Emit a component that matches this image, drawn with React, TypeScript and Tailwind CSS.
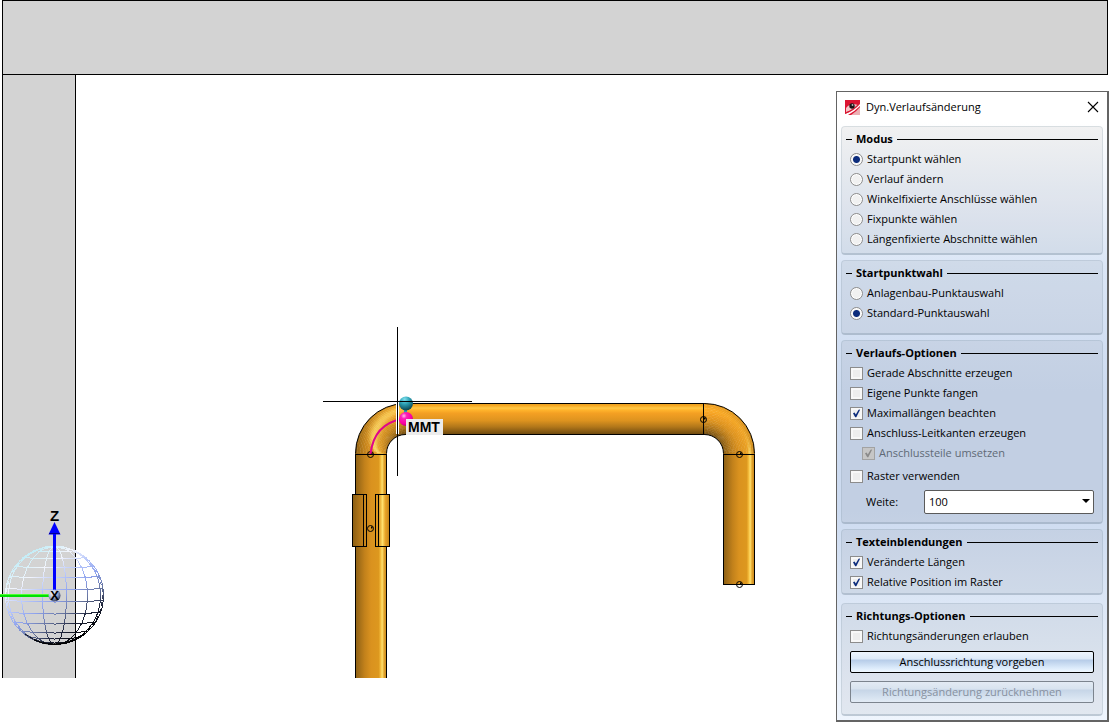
import { useState } from 'react'
import type { ReactNode } from 'react'

type Rgb = [number, number, number]
type Stop = [number, string]

// Shading across the tube, left to right for risers and top to bottom for runs
const RISER: Stop[] = [
  [0, '#8a5e14'],
  [0.12, '#a06c17'],
  [0.3, '#c2811b'],
  [0.5, '#da921f'],
  [0.74, '#dd981f'],
  [0.8, '#f3bb3c'],
  [0.85, '#ffe06c'],
  [0.91, '#e0a02a'],
  [1, '#c4841b'],
]
const RUN: Stop[] = [
  [0, '#e39a1f'],
  [0.08, '#f6a822'],
  [0.16, '#ffc844'],
  [0.22, '#ffb42c'],
  [0.32, '#f4a023'],
  [0.55, '#dd931f'],
  [0.75, '#b0761a'],
  [1, '#67450e'],
]
const RISER_MATT: Stop[] = [
  [0, '#8a5e14'],
  [0.12, '#a06c17'],
  [0.3, '#c2811b'],
  [0.5, '#da921f'],
  [0.8, '#e8a024'],
  [1, '#c4841b'],
]
const RUN_MATT: Stop[] = [
  [0, '#f0a122'],
  [0.2, '#ffae28'],
  [0.35, '#f4a023'],
  [0.55, '#dd931f'],
  [0.75, '#b0761a'],
  [1, '#67450e'],
]

const toRgb = (hex: string): Rgb => [
  parseInt(hex.slice(1, 3), 16),
  parseInt(hex.slice(3, 5), 16),
  parseInt(hex.slice(5, 7), 16),
]

const mix = (a: Rgb, b: Rgb, t: number): Rgb => [
  a[0] + (b[0] - a[0]) * t,
  a[1] + (b[1] - a[1]) * t,
  a[2] + (b[2] - a[2]) * t,
]

function sample(stops: Stop[], pos: number): Rgb {
  for (let i = 1; i < stops.length; i++) {
    if (pos <= stops[i][0]) {
      const [p0, c0] = stops[i - 1]
      const [p1, c1] = stops[i]
      return mix(toRgb(c0), toRgb(c1), (pos - p0) / (p1 - p0))
    }
  }
  return toRgb(stops[stops.length - 1][1])
}

const OUTER = 50
const INNER = 19

// 90 degree elbow, built from small shaded patches around (cx, cy)
function Elbow({ cx, cy, side }: { cx: number; cy: number; side: 'left' | 'right' }) {
  const patches: ReactNode[] = []
  const dir = side === 'left' ? -1 : 1
  const steps = 24
  const bands = 20
  for (let i = 0; i < steps; i++) {
    const t = (i + 0.5) / steps
    const a0 = (i / steps) * (Math.PI / 2)
    const a1 = Math.min(((i + 1.2) / steps) * (Math.PI / 2), Math.PI / 2)
    for (let j = 0; j < bands; j++) {
      const q = (j + 0.5) / bands
      const riser = sample(RISER_MATT, side === 'left' ? q : 1 - q)
      const run = sample(RUN_MATT, q)
      const center = side === 'left' ? 0.84 - 0.68 * Math.sqrt(t) : 0.15
      const width = side === 'left' ? 0.06 + 0.12 * Math.sin(Math.PI * t) : 0.05
      const power = side === 'left' ? 0.9 - 0.45 * t : Math.pow(1 - t, 6) * 0.9
      const glow = power * Math.exp(-Math.pow((q - center) / width, 2))
      const c = mix(mix(riser, run, t), [255, 226, 112], glow).map(Math.round)
      const r0 = OUTER - (OUTER - INNER) * (j / bands)
      const r1 = Math.max(OUTER - (OUTER - INNER) * ((j + 1.2) / bands), INNER)
      const pt = (r: number, a: number) =>
        `${(cx + dir * r * Math.cos(a)).toFixed(2)} ${(cy - r * Math.sin(a)).toFixed(2)}`
      patches.push(
        <path
          key={`${i}-${j}`}
          d={`M${pt(r0, a0)}L${pt(r0, a1)}L${pt(r1, a1)}L${pt(r1, a0)}Z`}
          fill={`rgb(${c.join(',')})`}
        />
      )
    }
  }
  const sweep = side === 'left' ? 1 : 0
  const arc = (r: number) => `M${cx + dir * r} ${cy}A${r} ${r} 0 0 ${sweep} ${cx} ${cy - r}`
  return (
    <g>
      {patches}
      <path d={arc(OUTER)} fill="none" stroke="#000" />
      <path d={arc(INNER)} fill="none" stroke="#000" />
    </g>
  )
}

function Gradient({ id, stops, vertical }: { id: string; stops: Stop[]; vertical?: boolean }) {
  return (
    <linearGradient id={id} x1="0" y1="0" x2={vertical ? '0' : '1'} y2={vertical ? '1' : '0'}>
      {stops.map(([pos, color]) => (
        <stop key={pos} offset={pos} stopColor={color} />
      ))}
    </linearGradient>
  )
}

function Node({ x, y }: { x: number; y: number }) {
  return (
    <g>
      <circle cx={x} cy={y} r="3" fill="none" stroke="#000" />
      <path d={`M${x + 0.5} ${y - 2}h1.5v2h-1.5z`} fill="#000" />
    </g>
  )
}

function Globe() {
  const radius = 49
  const parallels = [-48, -44, -37, -28, -18, -6, 6, 18, 28, 37, 43, 47]
  return (
    <g>
      <g fill="none" stroke="url(#globe)" shapeRendering="crispEdges">
        <circle cx="54.5" cy="595.5" r={radius} />
        <circle cx="54.5" cy="595.5" r={radius - 1} strokeDasharray="4 3" />
        {[12, 33, 46].map((rx) => (
          <ellipse key={rx} cx="54.5" cy="595.5" rx={rx} ry={radius} />
        ))}
        {parallels.map((dy) => {
          const half = Math.sqrt(radius * radius - dy * dy)
          const y = 595.5 + dy
          return (
            <path
              key={dy}
              d={`M${54.5 - half} ${y - 1}Q54.5 ${y + 2} ${54.5 + half} ${y - 0.9}`}
            />
          )
        })}
      </g>
      <path d="M25 634Q54 654 84 634" fill="none" stroke="#000" strokeDasharray="4 1" />
      <path d="M34 640Q54 649 74 640" fill="none" stroke="#000" />
      <rect x="0" y="594" width="50" height="3" fill="#00e000" />
      <rect x="0" y="594" width="50" height="1" fill="#4cff30" />
      <rect x="53" y="532" width="3" height="60" fill="#0000ff" />
      <path d="M54.5 522L60.5 534.5H48.5Z" fill="#0000ff" />
      <path d="M49 533.5h11" stroke="#000090" />
      <circle cx="54.5" cy="595.5" r="6" fill="url(#hub)" />
      <text x="54.5" y="521" textAnchor="middle" fontFamily="Liberation Sans, sans-serif" fontWeight="700" fontSize="15">
        Z
      </text>
      <text x="54.5" y="600" textAnchor="middle" fontFamily="Liberation Sans, sans-serif" fontWeight="700" fontSize="13">
        X
      </text>
    </g>
  )
}

function Drawing() {
  return (
    <svg className="absolute inset-0 h-full w-full" role="img" aria-label="Rohrverlauf">
      <defs>
        <Gradient id="riser" stops={RISER} />
        <Gradient id="run" stops={RUN} vertical />
        <Gradient id="clampLeft" stops={[[0, '#8a5e14'], [0.6, '#b87a1a'], [1, '#cf8b1d']]} />
        <Gradient id="clampRight" stops={[[0, '#dd951f'], [0.25, '#e09a20'], [0.5, '#ffe06c'], [0.7, '#e8a427'], [1, '#c4841b']]} />
        <linearGradient id="globe" gradientUnits="userSpaceOnUse" x1="28" y1="552" x2="84" y2="636">
          <stop offset="0" stopColor="#c0ecf6" />
          <stop offset="0.22" stopColor="#f2f5fd" />
          <stop offset="0.4" stopColor="#b4c4fa" />
          <stop offset="0.55" stopColor="#8ea2ec" />
          <stop offset="0.7" stopColor="#66749f" />
          <stop offset="0.85" stopColor="#1c2238" />
          <stop offset="1" stopColor="#000" />
        </linearGradient>
        <radialGradient id="hub" cx="0.35" cy="0.3" r="0.75">
          <stop offset="0" stopColor="#fff" />
          <stop offset="0.5" stopColor="#a9b6dc" />
          <stop offset="1" stopColor="#2c3658" />
        </radialGradient>
        <radialGradient id="cyan" cx="0.4" cy="0.2" r="0.8">
          <stop offset="0" stopColor="#7fe0ee" />
          <stop offset="0.45" stopColor="#2b9fb2" />
          <stop offset="1" stopColor="#0c4450" />
        </radialGradient>
        <radialGradient id="magenta" cx="0.35" cy="0.28" r="0.8">
          <stop offset="0" stopColor="#ffc0ec" />
          <stop offset="0.25" stopColor="#ff20b8" />
          <stop offset="0.7" stopColor="#f800a0" />
          <stop offset="1" stopColor="#900060" />
        </radialGradient>
      </defs>

      {/* walls */}
      <rect x="2.5" y="0.5" width="1105" height="74" fill="#d3d3d3" stroke="#000" />
      <rect x="3" y="75" width="72" height="603" fill="#d3d3d3" />
      <path d="M2.5 75V678M75.5 75V678" stroke="#000" />

      <Globe />

      {/* pipe */}
      <rect x="355" y="453" width="32" height="225" fill="url(#riser)" />
      <path d="M355.5 454V678M386.5 454V678" stroke="#000" />
      <rect x="405" y="403" width="300" height="32" fill="url(#run)" />
      <path d="M405 403.5H705M405 434.5H705" stroke="#000" />
      <rect x="723" y="453" width="32" height="131" fill="url(#riser)" />
      <path d="M723.5 454V584M754.5 454V584M723 584.5H755" stroke="#000" />
      <Elbow cx={405.5} cy={453.5} side="left" />
      <Elbow cx={704.5} cy={453.5} side="right" />
      <path d="M355 454.5H387M723 454.5H755M703.5 404V434" stroke="#000" />

      {/* clamp */}
      <rect x="352.5" y="494.5" width="14" height="52" fill="url(#clampLeft)" stroke="#000" />
      <rect x="375.5" y="494.5" width="14" height="52" fill="url(#clampRight)" stroke="#000" />
      <path d="M363.5 495V546M378.5 495V546" stroke="#000" />

      <Node x={370.5} y={454.5} />
      <Node x={370.5} y={528.5} />
      <Node x={703.5} y={419.5} />
      <Node x={739.5} y={454.5} />
      <Node x={739.5} y={584.5} />

      <path d="M370.5 454Q374 424 402 419" fill="none" stroke="#e0058c" strokeWidth="2" />

      {/* crosshair */}
      <path d="M397.5 403V434" stroke="#fff" strokeWidth="3" />
      <path d="M399 402.5H472" stroke="#fff" />
      <path d="M405.5 408V414" stroke="#2b9fb2" strokeWidth="3" />
      <circle cx="406" cy="403.5" r="7" fill="url(#cyan)" />
      <circle cx="406" cy="419" r="7" fill="url(#magenta)" />
      <path d="M397.5 327V476M323 401.5H472" stroke="#000" />

      <rect x="406" y="419" width="37" height="16" fill="#ececec" />
      <text x="408" y="432" fontFamily="Liberation Sans, sans-serif" fontWeight="700" fontSize="14">
        MMT
      </text>
    </svg>
  )
}

function Group({ title, className, children }: { title: string; className?: string; children: ReactNode }) {
  return (
    <fieldset
      className={`min-w-0 rounded border border-b-2 border-[#788ca0]/20 border-b-[#788ca0]/35 bg-black/5 pt-[2px] ${className ?? ''}`}
      aria-label={title}
    >
      <div className="flex h-5 items-center gap-1 pr-1 pl-1">
        <span className="h-px w-1.5 bg-black" />
        <h2 className="text-[11px] leading-5 font-bold">{title}</h2>
        <span className="h-px flex-1 bg-black" />
      </div>
      <div className="pr-2 pl-2">{children}</div>
    </fieldset>
  )
}

function Radio({ name, label, defaultChecked }: { name: string; label: string; defaultChecked?: boolean }) {
  return (
    <label className="flex h-5 items-center gap-1">
      <input
        type="radio"
        name={name}
        defaultChecked={defaultChecked}
        className="h-[13px] w-[13px] shrink-0 appearance-none rounded-full border border-[#8c8c8c] bg-[#f1f1f1] shadow-[inset_0_0_0_1px_#fff] checked:bg-[radial-gradient(circle,#0c2c7c_3px,#f4f4f4_4px)]"
      />
      <span>{label}</span>
    </label>
  )
}

interface CheckProps {
  label: string
  defaultChecked?: boolean
  disabled?: boolean
}

function Check({ label, defaultChecked, disabled }: CheckProps) {
  return (
    <label className={`flex h-5 items-center gap-1 ${disabled ? 'pl-3 text-[#5f6a76]' : ''}`}>
      <span className="relative h-[13px] w-[13px] shrink-0">
        <input
          type="checkbox"
          defaultChecked={defaultChecked}
          disabled={disabled}
          className="peer block h-[13px] w-[13px] appearance-none border border-[#8c8c8c] bg-[#eeeeee] shadow-[inset_0_0_0_2px_#f8f8f8] disabled:border-[#a2a2a2] disabled:bg-[#c6c6c6] disabled:shadow-none"
        />
        <svg
          viewBox="0 0 13 13"
          className="pointer-events-none absolute inset-0 hidden h-[13px] w-[13px] text-[#0c2c7c] peer-checked:block peer-disabled:text-[#8a8a8a]"
        >
          <path d="M3 6.2L4.6 5.6L5.8 7.6L8.6 2.8L10.2 2.6L6.3 10.2H5.2Z" fill="currentColor" />
        </svg>
      </span>
      <span>{label}</span>
    </label>
  )
}

function AppIcon() {
  return (
    <svg viewBox="0 0 15 15" className="h-[15px] w-[15px] shrink-0" aria-hidden="true">
      <rect width="15" height="15" fill="#dc1432" />
      <path d="M1 8Q4 4 9 4L13 5Q8 10 1 12Z" fill="#f6c4c8" />
      <path d="M0 14Q8 11 15 3V6Q9 12 3 15H0Z" fill="#fff" />
      <path d="M0 13Q8 10 15 2V4Q9 11 0 14Z" fill="#d81e36" />
      <path d="M6 15Q12 11 15 7V15Z" fill="#ecb0b4" />
      <circle cx="7" cy="6" r="2.7" fill="#1c1416" />
      <circle cx="7.5" cy="5" r="0.9" fill="#b8b8b8" />
    </svg>
  )
}

export default function App() {
  const [open, setOpen] = useState(true)

  return (
    <div className="relative flex min-h-screen items-start justify-end bg-white pt-[91px] text-black">
      <Drawing />
      {open && (
        <section
          role="dialog"
          aria-label="Dyn.Verlaufsänderung"
          className="relative w-[273px] border border-r-2 border-b-2 border-[#646464] bg-white font-['Open_Sans','Noto_Sans',sans-serif] text-[11px] leading-5"
        >
          <header className="flex h-[30px] items-center gap-1.5 pr-2 pl-2">
            <AppIcon />
            <h1 className="flex-1 text-[11px]">Dyn.Verlaufsänderung</h1>
            <button type="button" aria-label="Schließen" onClick={() => setOpen(false)}>
              <svg viewBox="0 0 12 12" className="h-3 w-3">
                <path d="M1 1L11 11M11 1L1 11" stroke="#000" strokeWidth="1.1" />
              </svg>
            </button>
          </header>

          <div className="flex flex-col gap-[5px] bg-[linear-gradient(#ffffff_0%,#dbe6f6_24%,#cddbf0_45%,#cddbf0_65%,#eff5fd_100%)] px-1 pt-1 pb-1">
            <Group title="Modus" className="pb-1">
              <Radio name="modus" label="Startpunkt wählen" defaultChecked />
              <Radio name="modus" label="Verlauf ändern" />
              <Radio name="modus" label="Winkelfixierte Anschlüsse wählen" />
              <Radio name="modus" label="Fixpunkte wählen" />
              <Radio name="modus" label="Längenfixierte Abschnitte wählen" />
            </Group>

            <Group title="Startpunktwahl" className="pb-[10px]">
              <Radio name="startpunkt" label="Anlagenbau-Punktauswahl" />
              <Radio name="startpunkt" label="Standard-Punktauswahl" defaultChecked />
            </Group>

            <Group title="Verlaufs-Optionen" className="pb-2">
              <Check label="Gerade Abschnitte erzeugen" />
              <Check label="Eigene Punkte fangen" />
              <Check label="Maximallängen beachten" defaultChecked />
              <Check label="Anschluss-Leitkanten erzeugen" />
              <Check label="Anschlussteile umsetzen" defaultChecked disabled />
              <div className="pt-[3px]">
                <Check label="Raster verwenden" />
              </div>
              <div className="flex items-center pt-1 pl-4">
                <label htmlFor="weite" className="w-[58px]">
                  Weite:
                </label>
                <div className="relative flex-1">
                  <select
                    id="weite"
                    defaultValue="100"
                    className="block h-6 w-full appearance-none rounded-xs border border-[#5a5a5a] bg-white pl-1 text-[11px]"
                  >
                    <option>50</option>
                    <option>100</option>
                    <option>200</option>
                  </select>
                  <svg viewBox="0 0 8 4" className="pointer-events-none absolute top-[9px] right-1 h-1 w-2">
                    <path d="M0 0H8L4 4Z" />
                  </svg>
                </div>
              </div>
            </Group>

            <Group title="Texteinblendungen" className="pb-px">
              <Check label="Veränderte Längen" defaultChecked />
              <Check label="Relative Position im Raster" defaultChecked />
            </Group>

            <Group title="Richtungs-Optionen" className="mt-[3px] pb-[11px]">
              <Check label="Richtungsänderungen erlauben" />
              <div className="flex flex-col gap-2 pt-[5px]">
                <button
                  type="button"
                  className="h-[22px] rounded-xs border border-black bg-[linear-gradient(#eef5fd_0%,#dce9f8_35%,#b6cce8_40%,#dcebfb_80%,#f0f8ff_100%)]"
                >
                  Anschlussrichtung vorgeben
                </button>
                <button
                  type="button"
                  disabled
                  className="h-[22px] rounded-xs border border-[#7c848e] bg-[linear-gradient(#e3ebf4_0%,#d8e3ef_35%,#c6d5e7_40%,#d8e4f1_80%,#e2ebf5_100%)] text-[#8791a0]"
                >
                  Richtungsänderung zurücknehmen
                </button>
              </div>
            </Group>
          </div>
        </section>
      )}
    </div>
  )
}
